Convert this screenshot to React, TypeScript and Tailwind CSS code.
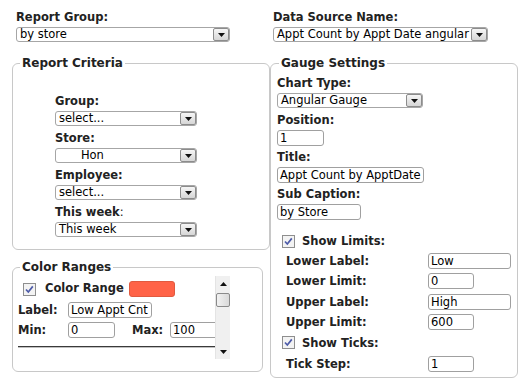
import React from 'react';

const font = { fontFamily: '"DejaVu Sans", Verdana, sans-serif' };

const Arrow: React.FC<{ up?: boolean }> = ({ up }) => (
  <svg width="7" height="4" viewBox="0 0 7 4">
    <path d={up ? 'M0 4 L3.5 0 L7 4 Z' : 'M0 0 L7 0 L3.5 4 Z'} fill="#111" />
  </svg>
);

// Old-style select with grey drop button
const Select: React.FC<{ value: string; width: string }> = ({ value, width }) => (
  <div className={`flex h-[15px] items-stretch border border-[#a6a6a6] rounded-[3px] bg-white ${width}`}>
    <div className="flex-1 pl-[3px] text-[11.5px] leading-[13px] text-black whitespace-pre overflow-hidden">{value}</div>
    <div className="w-[16px] flex items-end justify-center pb-[3px] border border-[#8c8c8c] rounded-[2px] bg-gradient-to-b from-[#f6f6f6] to-[#d6d6d6]">
      <Arrow />
    </div>
  </div>
);

const Input: React.FC<{ value: string; width: string }> = ({ value, width }) => (
  <div className={`h-[16px] shrink-0 border border-[#a0a0a0] rounded-[3px] bg-white pl-[2px] text-[11.5px] leading-[14px] text-black whitespace-nowrap overflow-hidden ${width}`}>
    {value}
  </div>
);

const Check: React.FC = () => (
  <svg width="13" height="13" viewBox="0 0 13 13" className="shrink-0">
    <rect x="0.5" y="0.5" width="12" height="12" fill="#f3f3f3" stroke="#8e8e8e" />
    <path d="M3 6.5 L5.3 9 L9.8 3.4" fill="none" stroke="#4d5ba8" strokeWidth="1.7" />
  </svg>
);

const Label: React.FC<{ children: React.ReactNode; className?: string }> = ({ children, className = '' }) => (
  <div className={`shrink-0 text-[11.5px] font-bold leading-[14px] text-[#222] ${className}`}>{children}</div>
);

const Legend: React.FC<{ children: React.ReactNode; className: string }> = ({ children, className }) => (
  <legend className={`px-[2px] text-[12px] font-bold leading-[14px] text-[#222] ${className}`}>{children}</legend>
);

export default function App() {
  return (
    <div className="w-[519px] h-[380px] bg-white overflow-hidden" style={font}>
      {/* top selectors */}
      <div className="flex pt-[10px]">
        <div className="w-[273px] pl-[16px]">
          <Label>Report Group:</Label>
          <div className="mt-[3px]">
            <Select value="by store" width="w-[214px]" />
          </div>
        </div>
        <div>
          <Label>Data Source Name:</Label>
          <div className="mt-[3px]">
            <Select value="Appt Count by Appt Date angular" width="w-[215px]" />
          </div>
        </div>
      </div>

      <div className="flex mt-[14px] pl-[12px]">
        {/* left column */}
        <div className="w-[258px]">
          <fieldset className="border border-[#c8c8c8] rounded-[6px] pl-[42px] pt-[24px] pb-[12px]">
            <Legend className="-ml-[35px]">Report Criteria</Legend>
            <Label>Group:</Label>
            <div className="mt-[3px]"><Select value="select..." width="w-[142px]" /></div>
            <Label className="mt-[5px]">Store:</Label>
            <div className="mt-[3px]"><Select value={'      Hon'} width="w-[142px]" /></div>
            <Label className="mt-[5px]">Employee:</Label>
            <div className="mt-[3px]"><Select value="select..." width="w-[142px]" /></div>
            <Label className="mt-[5px]">This week<span className="font-normal">:</span></Label>
            <div className="mt-[3px]"><Select value="This week" width="w-[142px]" /></div>
          </fieldset>

          <fieldset className="mt-[10px] w-[251px] border border-[#c8c8c8] rounded-[6px] pl-[4px] pt-[2px] pb-[12px]">
            <Legend className="ml-[3px]">Color Ranges</Legend>
            <div className="flex h-[83px] w-[213px]">
              <div className="w-[198px] overflow-hidden pt-[5px] pl-[1px]">
                <div className="flex items-center h-[16px]">
                  <div className="ml-[5px]"><Check /></div>
                  <span className="ml-[9px] text-[11.5px] font-bold text-[#222]">Color Range</span>
                  <div className="ml-[5px] w-[46px] h-[16px] rounded-[3px] bg-[#ff6347] border border-[#e05a40]" />
                </div>
                <div className="flex items-center h-[16px] mt-[5px]">
                  <Label className="w-[50px]">Label:</Label>
                  <Input value="Low Appt Cnt" width="w-[84px]" />
                </div>
                <div className="flex items-center h-[16px] mt-[4px]">
                  <Label className="w-[50px]">Min:</Label>
                  <Input value="0" width="w-[47px]" />
                  <Label className="ml-[17px] w-[38px]">Max:</Label>
                  <Input value="100" width="w-[60px]" />
                </div>
                <div className="mt-[8px] border-t border-b border-t-[#3a3a3a] border-b-[#c0c0c0]" />
              </div>
              <div className="w-[15px] flex flex-col items-center bg-[#f0f0f0] border-l border-[#e4e4e4]">
                <div className="h-[15px] flex items-center justify-center"><Arrow up /></div>
                <div className="mt-[2px] w-[14px] h-[14px] rounded-[2px] border border-[#8a8a8a] bg-gradient-to-r from-[#f2f2f2] to-[#d9d9d9]" />
                <div className="flex-1" />
                <div className="h-[15px] flex items-center justify-center"><Arrow /></div>
              </div>
            </div>
          </fieldset>
        </div>

        {/* right column */}
        <fieldset className="w-[248px] border border-[#c8c8c8] rounded-[6px] pl-[6px] pt-[6px] pb-[3px]">
          <Legend className="ml-[2px]">Gauge Settings</Legend>
          <Label>Chart Type:</Label>
          <div className="mt-[3px]"><Select value="Angular Gauge" width="w-[146px]" /></div>
          <Label className="mt-[5px]">Position:</Label>
          <div className="mt-[3px]"><Input value="1" width="w-[47px]" /></div>
          <Label className="mt-[4px]">Title:</Label>
          <div className="mt-[3px]"><Input value="Appt Count by ApptDate" width="w-[147px]" /></div>
          <Label className="mt-[4px]">Sub Caption:</Label>
          <div className="mt-[3px]"><Input value="by Store" width="w-[84px]" /></div>

          <div className="mt-[11px]">
            <div className="flex items-center h-[20px] pl-[5px]">
              <Check />
              <Label className="ml-[7px]">Show Limits:</Label>
            </div>
            <div className="flex items-center h-[20px] pl-[9px]">
              <Label className="w-[142px]">Lower Label:</Label>
              <Input value="Low" width="w-[83px]" />
            </div>
            <div className="flex items-center h-[20px] pl-[9px]">
              <Label className="w-[142px]">Lower Limit:</Label>
              <Input value="0" width="w-[46px]" />
            </div>
            <div className="flex items-center h-[21px] pl-[9px]">
              <Label className="w-[142px]">Upper Label:</Label>
              <Input value="High" width="w-[83px]" />
            </div>
            <div className="flex items-center h-[20px] pl-[9px]">
              <Label className="w-[142px]">Upper Limit:</Label>
              <Input value="600" width="w-[46px]" />
            </div>
            <div className="flex items-center h-[21px] pl-[5px]">
              <Check />
              <Label className="ml-[7px]">Show Ticks:</Label>
            </div>
            <div className="flex items-center h-[21px] pl-[9px]">
              <Label className="w-[142px]">Tick Step:</Label>
              <Input value="1" width="w-[46px]" />
            </div>
          </div>
        </fieldset>
      </div>
    </div>
  );
}
